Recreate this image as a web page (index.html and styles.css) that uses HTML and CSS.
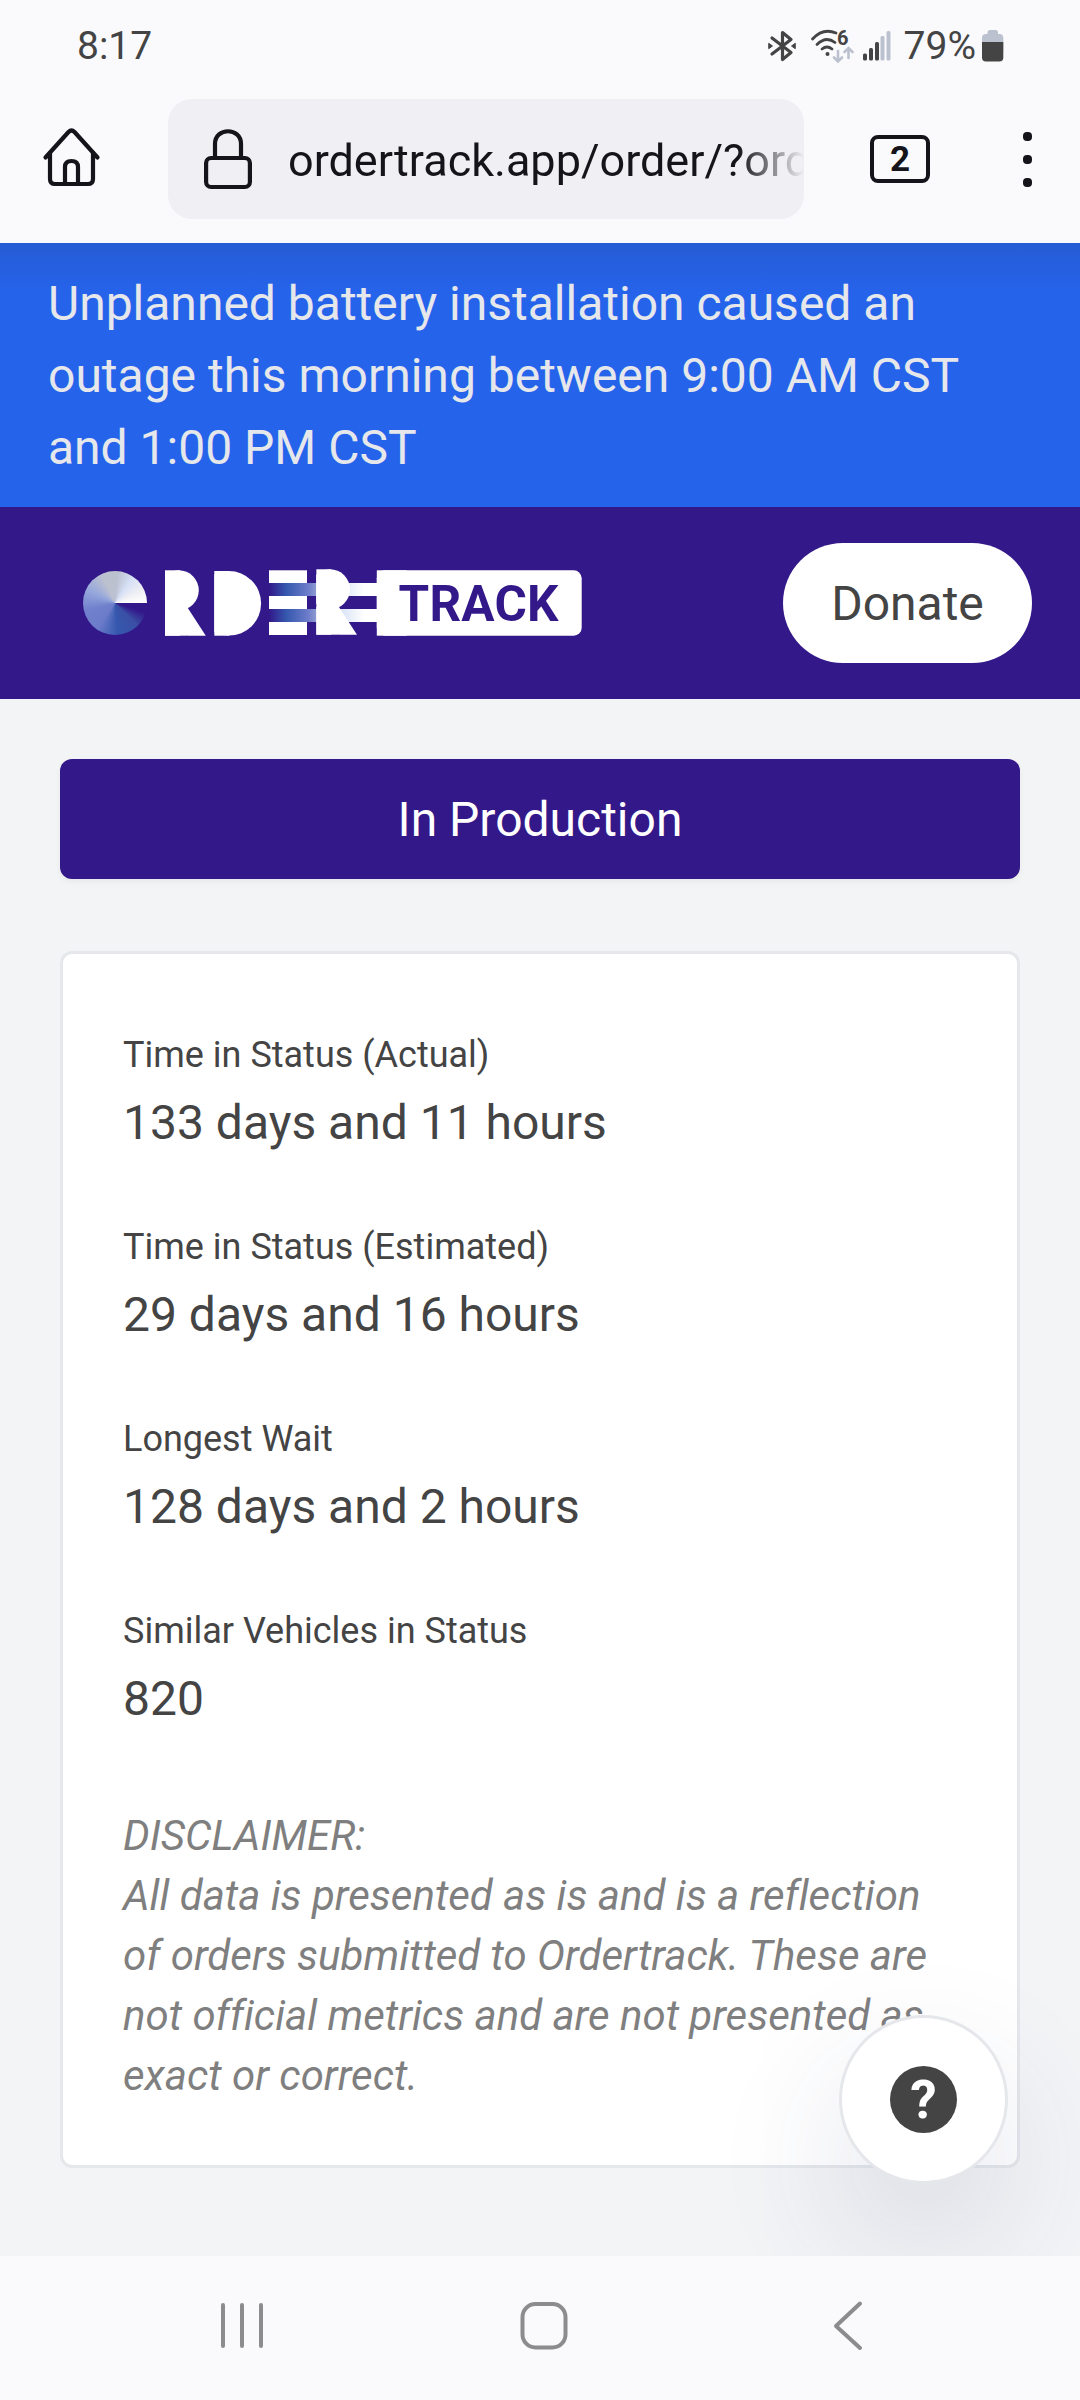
FILE: index.html
```html
<!DOCTYPE html>
<html lang="en">
<head>
  <meta charset="UTF-8" />
  <title>Ordertrack</title>
  <link rel="stylesheet" href="styles.css">
</head>
<body>
  <div class="status-bar">
    <span class="clock">8:17</span>
    <div class="status-icons">
      <svg class="bluetooth" width="28" height="32" viewBox="0 0 28 32" fill="none" stroke="#444" stroke-width="3.2" stroke-linecap="round" stroke-linejoin="round">
        <path d="M4 8 L23 22.5 L14.5 29.5 V2.5 L23 9.5 L4 24" />
        <path d="M1 13.5 L4.5 16 L1 18.5 Z M27 13.5 L23.5 16 L27 18.5 Z" fill="#444" stroke-width="1" />
      </svg>
      <svg class="wifi" width="44" height="34" viewBox="0 0 44 34" fill="none" stroke="#444" stroke-width="2.8" stroke-linecap="round">
        <path d="M2.5 10 Q13 -1.5 26 4" />
        <path d="M7 15.5 Q16 6.500 25 13.5" />
        <path d="M12 20 Q17 16 22 20" />
        <circle cx="17.500" cy="25" r="2" fill="#444" stroke="none" />
        <text x="27" y="15.5" class="wifi-gen">6</text>
        <path d="M28 22 V32 M24 28.5 L28 32.5 L32 28.5 M38.5 29 V19.5 M34.5 23 L38.5 19 L42.5 23" stroke="#bcc1d0" stroke-width="2.6" />
      </svg>
      <svg class="signal" width="28" height="30" viewBox="0 0 28 30">
        <rect x="0" y="22.5" width="4" height="7" rx="1.5" fill="#444" />
        <rect x="6" y="17" width="4" height="12.5" rx="1.5" fill="#444" />
        <rect x="12" y="11" width="4" height="18.5" rx="1.5" fill="#444" />
        <rect x="17.5" y="5" width="4" height="24.5" rx="1.5" fill="#bcc1d0" />
        <rect x="23.5" y="0" width="4" height="29.5" rx="1.5" fill="#bcc1d0" />
      </svg>
      <span class="battery-level">79%</span>
      <svg class="battery" width="22" height="32" viewBox="0 0 22 32">
        <rect x="5.5" y="0" width="10.5" height="8" rx="2.5" fill="#bcc1d0" />
        <rect x="0" y="4" width="21.3" height="20" rx="4" fill="#bcc1d0" />
        <path d="M0 12 H21.3 V27.5 Q21.3 31.5 17.3 31.5 H4 Q0 31.5 0 27.5 Z" fill="#444" />
      </svg>
    </div>
  </div>

  <div class="toolbar">
    <svg class="home" width="58" height="60" viewBox="0 0 58 60" fill="none" stroke="#15141a" stroke-width="4.2" stroke-linecap="round" stroke-linejoin="round">
      <path d="M2.5 29.5 L25.5 4 Q28.5 1 31.5 4 L54.5 29.5" />
      <path d="M7 25 V51 Q7 56 12 56 H45 Q50 56 50 51 V25" />
      <path d="M22 56 V39 Q22 33 28.5 33 Q35 33 35 39 V56" />
    </svg>
    <div class="address">
      <svg class="lock" width="48" height="60" viewBox="0 0 48 60" fill="none" stroke="#15141a" stroke-width="4.2">
        <path d="M11 28 V15 C11 -2 37 -2 37 15 V28" />
        <rect x="2.1" y="29" width="43.8" height="29" rx="5" />
      </svg>
      <span class="url">ordertrack.app/order/?ord</span>
    </div>
    <div class="tabs">2</div>
    <div class="menu"><i></i><i></i><i></i></div>
  </div>

  <main class="page">
    <div class="banner">Unplanned battery installation caused an outage this morning between 9:00 AM CST and 1:00 PM CST</div>

    <header class="navbar">
      <div class="logo">
        <span class="logo-wheel"></span>
        <svg class="logo-mark" width="417" height="68" viewBox="165 569 417 68">
          <defs>
            <linearGradient id="stripe" x1="0" x2="1" y1="0" y2="0">
              <stop offset="0" stop-color="#33188a" />
              <stop offset="0.16" stop-color="#3558ae" />
              <stop offset="0.36" stop-color="#6c7cca" />
              <stop offset="0.5" stop-color="#a9b2d4" />
              <stop offset="0.65" stop-color="#d6e1f6" />
              <stop offset="0.88" stop-color="#ffffff" />
            </linearGradient>
            <clipPath id="bowl-edge">
              <rect x="165" y="569" width="50" height="68" />
            </clipPath>
            <clipPath id="round-edge">
              <rect x="214.3" y="569" width="50" height="68" />
            </clipPath>
            <g id="bowl" clip-path="url(#bowl-edge)">
              <rect x="165" y="570.3" width="15" height="65.4" />
              <circle cx="178.8" cy="590.3" r="20" />
              <rect x="165" y="608" width="22.6" height="27.7" />
              <rect x="-18" y="0" width="18" height="27.7" transform="translate(187.8 608) skewX(33)" />
            </g>
          </defs>
          <g fill="#fff">
            <use href="#bowl" />
            <rect x="214.3" y="571" width="15" height="64.7" />
            <circle cx="228.8" cy="603.3" r="32.3" clip-path="url(#round-edge)" />
            <rect x="269" y="570.3" width="38" height="12.7" />
            <rect x="269" y="596" width="38" height="13" />
            <rect x="269" y="622" width="38" height="13" />
          </g>
          <rect x="269" y="583" width="108" height="13" fill="url(#stripe)" />
          <rect x="269" y="609" width="108" height="13" fill="url(#stripe)" />
          <use href="#bowl" fill="#fff" transform="translate(151.2 -1)" />
          <rect x="376.8" y="570.3" width="30" height="65.4" fill="#fff" />
          <rect x="376.8" y="570.3" width="204.9" height="65.4" rx="8" fill="#fff" />
          <text class="logo-text" x="398.5" y="620.6" textLength="160">TRACK</text>
        </svg>
      </div>
      <button class="donate">Donate</button>
    </header>

    <div class="content">
      <div class="order-status">In Production</div>

      <section class="card">
        <dl class="stats">
          <div><dt>Time in Status (Actual)</dt><dd>133 days and 11 hours</dd></div>
          <div><dt>Time in Status (Estimated)</dt><dd>29 days and 16 hours</dd></div>
          <div><dt>Longest Wait</dt><dd>128 days and 2 hours</dd></div>
          <div><dt>Similar Vehicles in Status</dt><dd>820</dd></div>
        </dl>
        <p class="disclaimer">DISCLAIMER:<br>All data is presented as is and is a reflection of orders submitted to Ordertrack. These are not official metrics and are not presented as exact or correct.</p>
      </section>
    </div>

    <button class="help"><span>?</span></button>
  </main>

  <nav class="system-nav">
    <svg width="44" height="50" viewBox="0 0 44 50" stroke="#8c8c8e" stroke-width="4" stroke-linecap="round">
      <path d="M3 4 V45 M22 4 V45 M41 4 V45" />
    </svg>
    <svg class="nav-home" width="50" height="50" viewBox="0 0 50 50" fill="none" stroke="#8c8c8e" stroke-width="4">
      <rect x="3.5" y="3" width="43" height="43.5" rx="13" />
    </svg>
    <svg width="32" height="52" viewBox="0 0 32 52" fill="none" stroke="#8c8c8e" stroke-width="4" stroke-linecap="round" stroke-linejoin="round">
      <path d="M28 3.5 L4 26 L28 48" />
    </svg>
  </nav>
</body>
</html>
```
FILE: styles.css
```css
* {
  box-sizing: border-box;
}

body {
  margin: 0;
  width: 1080px;
  height: 2400px;
  display: flex;
  flex-direction: column;
  overflow: hidden;
  font-family: Roboto, "Liberation Sans", sans-serif;
  font-size: 48px;
  line-height: 72px;
  font-variant-ligatures: none;
  background: #fafafc;
  color: #444;
}

svg {
  display: block;
  flex: none;
  overflow: visible;
}

/* Phone status bar */
.status-bar {
  height: 90px;
  padding: 2px 76px 0 77px;
  display: flex;
  justify-content: space-between;
  align-items: center;
  font-size: 39px;
}

.status-icons {
  display: flex;
  align-items: center;
}

.wifi {
  margin-left: 14px;
}

.wifi-gen {
  font-size: 20px;
  font-weight: bold;
  fill: #444;
  stroke: none;
}

.signal {
  margin-left: 9px;
}

.battery-level {
  margin-left: 13px;
}

.battery {
  margin-left: 6px;
}

/* Browser toolbar */
.toolbar {
  height: 153px;
  padding: 9px 48px 0 43px;
  display: flex;
  align-items: flex-start;
  color: #15141a;
}

.home {
  margin-top: 29px;
}

.address {
  width: 636px;
  height: 120px;
  margin-left: 67px;
  padding-left: 36px;
  display: flex;
  align-items: center;
  background: #f0eff4;
  border-radius: 24px;
  overflow: hidden;
}

.url {
  flex: 1;
  margin-left: 36px;
  padding-top: 4px;
  font-size: 45px;
  white-space: nowrap;
  overflow: hidden;
  -webkit-mask-image: linear-gradient(to right, #000 450px, transparent 516px);
  mask-image: linear-gradient(to right, #000 450px, transparent 516px);
}

.tabs {
  width: 60px;
  height: 48px;
  margin: 36px 0 0 66px;
  border: 4px solid #15141a;
  border-radius: 8px;
  font-size: 35px;
  font-weight: bold;
  line-height: 41px;
  text-align: center;
}

.menu {
  margin: 33px 0 0 93px;
  display: flex;
  flex-direction: column;
  gap: 14px;
}

.menu i {
  width: 9px;
  height: 9px;
  background: #15141a;
  border-radius: 4px;
}

/* Web page */
.page {
  position: relative;
  height: 2013px;
  overflow: hidden;
  background: #f3f4f6;
}

.banner {
  padding: 25px 48px 23px;
  color: #e5e7eb;
  background: linear-gradient(rgba(40, 80, 170, 0.35), rgba(37, 99, 235, 0) 50px), #2563eb;
}

.navbar {
  height: 192px;
  padding: 0 48px 0 83px;
  display: flex;
  justify-content: space-between;
  align-items: center;
  background: #33188a;
}

.logo {
  display: flex;
  align-items: center;
  gap: 18px;
}

.logo-wheel {
  width: 64px;
  height: 64px;
  border-radius: 50%;
  background: conic-gradient(from 90deg, #33188a 0deg, #33188a 18deg, #3a4fa5 45deg, #3558ae 85deg, #6c7cca 125deg, #7080cc 165deg, #94a6dc 205deg, #bcc1d0 245deg, #bcc1d0 275deg, #d6e1f6 305deg, #f0eff4 335deg, #fff 360deg);
}

.logo-text {
  font-size: 49.5px;
  font-weight: bold;
  fill: #33188a;
}

.donate {
  width: 249px;
  height: 120px;
  padding: 2px 0 0;
  border: none;
  border-radius: 60px;
  background: #fff;
  color: #444;
  font: inherit;
}

.content {
  padding: 60px;
}

.order-status {
  height: 120px;
  line-height: 122px;
  text-align: center;
  color: #fff;
  background: #33188a;
  border-radius: 12px;
  box-shadow: 0 3px 6px rgba(0, 0, 0, 0.05);
}

.card {
  height: 1217px;
  margin-top: 72px;
  padding: 74px 60px;
  background: #fff;
  border: 3px solid #e5e7eb;
  border-radius: 12px;
}

.stats {
  margin: 0;
}

.stats div {
  height: 192px;
}

.stats dt {
  font-size: 36px;
  line-height: 54px;
}

.stats dd {
  margin: 5px 0 0;
}

.disclaimer {
  margin: 10px 0 0;
  font-size: 42px;
  line-height: 60px;
  font-style: italic;
  color: #7f7f80;
}

/* Floating help button */
.help {
  position: absolute;
  right: 72px;
  bottom: 72px;
  width: 169px;
  height: 169px;
  padding: 0;
  display: flex;
  align-items: center;
  justify-content: center;
  border: 3px solid #e5e7eb;
  border-radius: 50%;
  background: #fff;
  box-shadow: 0 60px 140px rgba(40, 60, 110, 0.14);
}

.help span {
  width: 67px;
  height: 67px;
  border-radius: 50%;
  background: #444;
  color: #fff;
  font: bold 53px/69px Roboto, sans-serif;
  text-align: center;
}

/* Android navigation */
.system-nav {
  height: 144px;
  padding: 0 216px 5px 220px;
  display: flex;
  justify-content: space-between;
  align-items: center;
}

.nav-home {
  margin-right: 8px;
}
```
